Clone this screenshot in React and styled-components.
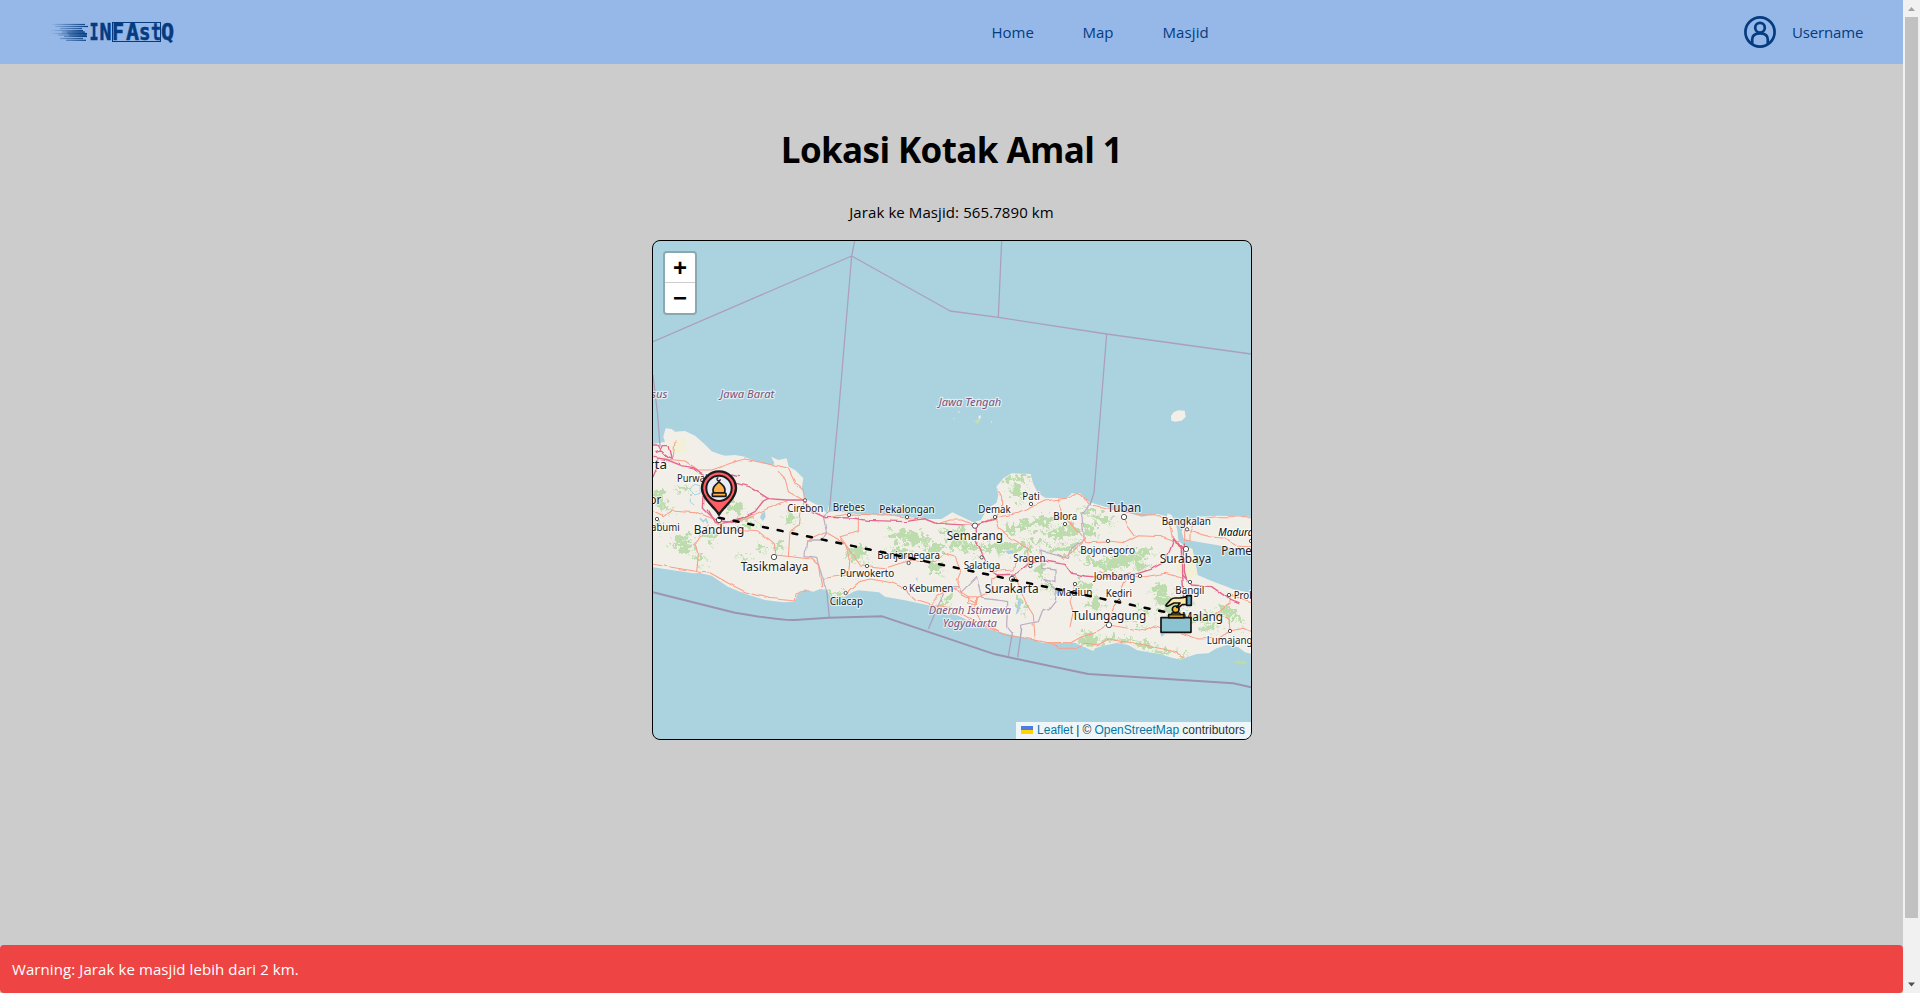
import React from "react";
import styled, { createGlobalStyle } from "styled-components";

const GlobalStyle = createGlobalStyle`
  *, *::before, *::after { box-sizing: border-box; }
  html, body { margin: 0; height: 100%; overflow: hidden; }
  body {
    background: #ccc;
    color: #000;
    font-family: "Segoe UI", "Open Sans", sans-serif;
    font-size: 15px;
    line-height: 24px;
  }
  h1, p { margin: 0; }
`;

const Shell = styled.div`
  display: flex;
  height: 993px;
`;

const Page = styled.div`
  flex: 1;
  min-width: 0;
  display: flex;
  flex-direction: column;
`;

const NavBar = styled.nav`
  height: 64px;
  flex: none;
  padding: 0 40px;
  display: flex;
  align-items: center;
  justify-content: space-between;
  background: #95b8e8;
  color: #053b80;
`;

const Brand = styled.div`
  width: 416px;
  height: 64px;
  svg { display: block; }
`;

const NavLinks = styled.div`
  display: flex;
  gap: 48px;
`;

const NavLink = styled.a`
  width: ${(p) => p.$width}px;
  white-space: nowrap;
  letter-spacing: ${(p) => p.$spacing || 0}px;
`;

const Account = styled.div`
  display: flex;
  align-items: center;
  gap: 16px;
  svg { display: block; }
`;

const Main = styled.main`
  flex: 1;
  display: flex;
  flex-direction: column;
  align-items: center;
`;

const Title = styled.h1`
  margin-top: 66px;
  font-size: 35px;
  line-height: 40px;
  font-weight: 700;
  letter-spacing: -0.6px;
`;

const Distance = styled.p`
  margin-top: 30px;
  height: 24px;
  letter-spacing: 0.09px;
`;

const MapFrame = styled.section`
  position: relative;
  left: 0.5px;
  width: 600px;
  height: 500px;
  margin-top: 16px;
  border: 1px solid #000;
  border-radius: 8px;
  overflow: hidden;
  background: #abd3df;
`;

const MapCanvas = styled.svg`
  display: block;
  width: 598px;
  height: 498px;
`;

const ZoomControl = styled.div`
  position: absolute;
  top: 10px;
  left: 10px;
  border: 2px solid rgba(0, 0, 0, 0.2);
  border-radius: 4px;
  background-clip: padding-box;
`;

const ZoomButton = styled.div`
  width: 30px;
  height: 30px;
  background: #fff;
  border-bottom: ${(p) => (p.$divided ? "1px solid #ccc" : "0")};
  border-radius: ${(p) => (p.$divided ? "2px 2px 0 0" : "0 0 2px 2px")};
  font: bold 24px/29px "Liberation Sans", Arial, sans-serif;
  text-align: center;
`;

const Attribution = styled.div`
  position: absolute;
  right: 0;
  bottom: 0;
  height: 17px;
  padding: 0 6px 0 5px;
  background: rgba(255, 255, 255, 0.8);
  color: #333;
  font: 12px/17px "Liberation Sans", Arial, sans-serif;
  word-spacing: -0.2px;
  white-space: nowrap;
  a { color: #0078a8; }
  svg { margin-right: 4px; }
`;

const Toast = styled.div`
  height: 48px;
  flex: none;
  padding: 12px;
  border-radius: 4px;
  background: #ef4444;
  color: #fff;
  letter-spacing: 0.09px;
`;

const ScrollTrack = styled.div`
  width: 17px;
  flex: none;
  display: flex;
  flex-direction: column;
  align-items: center;
  background: #f1f1f1;
  svg { flex: none; display: block; }
`;

const ScrollThumb = styled.div`
  width: 13px;
  height: 901px;
  background: #c1c1c1;
`;

function Logo() {
  const streaks = [
    [52, 24.5, 85], [55, 26.5, 88], [60, 28.5, 82], [51, 30.5, 83],
    [62, 32, 85], [51, 33.5, 87], [58, 35, 87], [64, 36.5, 87],
    [60, 38.5, 83], [66, 40.3, 86],
  ];
  return (
    <svg width="140" height="64" viewBox="40 0 140 64" aria-label="INFAstQ">
      <defs>
        <linearGradient id="streak" gradientUnits="userSpaceOnUse" x1="50" x2="88" y1="0" y2="0">
          <stop offset="0" stopColor="#053b80" stopOpacity="0" />
          <stop offset="1" stopColor="#053b80" />
        </linearGradient>
      </defs>
      {streaks.map(([a, y, b]) => (
        <rect key={y} x={a} y={y - 0.6} width={b - a} height="1.2" fill="url(#streak)" />
      ))}
      <path d="M66 31.5L82 30L84 32L87 34L85 37L70 36.5z" fill="url(#streak)" opacity=".6" />
      <rect x="112.5" y="22.5" width="48" height="19" fill="none" stroke="#053b80" />
      <g fill="#053b80" stroke="#053b80" strokeWidth=".5" fontFamily="DejaVu Sans Mono, monospace" fontWeight="700" fontSize="22.5">
        {[["I", 89.5, 9], ["N", 99.5, 12], ["F", 112, 12], ["A", 126, 13], ["s", 139, 11.5], ["t", 151, 10], ["Q", 161, 13]].map(([c, x, w]) => (
          <text key={c} transform={`translate(${x} 39.8) scale(${w / 13.5} 1)`}>{c}</text>
        ))}
      </g>
    </svg>
  );
}

function UserIcon() {
  return (
    <svg width="32" height="32" viewBox="0 0 32 32" fill="none" stroke="#053b80" strokeWidth="2.7">
      <circle cx="16" cy="16" r="14.6" />
      <circle cx="16" cy="11.7" r="4.8" />
      <path d="M8.2 28V23.5C8.2 19.5 11 17.3 16 17.3S23.8 19.5 23.8 23.5V28" />
    </svg>
  );
}

/* Map geometry is expressed at three units per pixel. */
const JAVA =
  "M24 87L60 80L55 65L62 40L80 42L90 50L120 48L150 62L175 84L200 109L222 117L240 122L270 120L300 125L320 135L345 142L385 152L388 143L378 125L400 135L425 130L431 155L450 165L475 190L470 222L480 250L500 262L528 275L546 296L552 268L556 290L600 292L640 298L700 300L780 305L850 312L890 312L922 292L950 305L985 322L1008 315L1025 283L1055 263L1060 240L1054 215L1075 190L1100 175L1157 177L1164 205L1178 233L1200 248L1265 250L1280 235L1305 235L1330 260L1385 277L1440 290L1490 305L1540 297L1565 305L1568 295L1580 300L1590 320L1597 345L1600 375L1612 388L1642 402L1651 440L1658 480L1700 498L1740 513L1770 525L1818 533V716L1800 712L1780 697L1745 690L1715 700L1690 715L1655 717L1625 727L1608 734L1580 728L1545 717L1510 712L1475 705L1450 690L1415 684L1375 692L1350 700L1345 708L1315 695L1290 683L1260 683L1215 683L1190 683L1170 674L1100 660L1040 645L1000 631L930 598L850 571L780 556L720 545L702 532L640 526L625 530L600 545L560 550L545 525L525 522L505 530L480 523L458 538L448 560L415 562L360 555L300 536L250 516L200 482L165 474L145 475L100 468L24 457z";

const MADURA =
  "M1616 330L1637 318L1655 305L1720 302L1818 305V410L1765 400L1715 390L1665 382L1640 377L1616 371L1610 350z";

const FORESTS = [
  [115, 395, 30, 16], [110, 370, 22, 10], [190, 365, 26, 12], [45, 240, 16, 18], [50, 272, 22, 13], [115, 222, 18, 10],
  [270, 275, 26, 16], [310, 315, 26, 12], [440, 308, 15, 15], [402, 392, 14, 12], [160, 430, 10, 12], [295, 425, 9, 8],
  [350, 398, 8, 9], [45, 328, 16, 8], [640, 412, 28, 17], [625, 425, 16, 10], [780, 362, 48, 18], [820, 378, 30, 16],
  [765, 410, 30, 12], [870, 400, 28, 14], [925, 350, 36, 10], [940, 380, 30, 16], [980, 400, 25, 14], [870, 458, 22, 14],
  [905, 555, 14, 20], [1115, 230, 20, 17], [1085, 195, 18, 12], [1130, 188, 28, 8], [1165, 325, 42, 11],
  [1110, 340, 30, 11], [1055, 395, 42, 14], [1120, 400, 42, 12], [1215, 312, 38, 10], [1275, 345, 34, 17],
  [1235, 360, 34, 10], [1180, 380, 24, 9], [1245, 405, 32, 13], [1290, 395, 22, 10], [1330, 288, 18, 9],
  [1375, 312, 32, 12], [1335, 345, 16, 18], [1440, 435, 48, 15], [1385, 452, 42, 14], [1485, 410, 34, 12],
  [1345, 440, 26, 10], [1490, 450, 22, 10], [1185, 468, 12, 20], [1210, 520, 12, 12], [1320, 512, 16, 13],
  [1345, 565, 14, 16], [1545, 525, 28, 18], [1555, 560, 26, 16], [1575, 580, 26, 14], [1665, 610, 36, 16],
  [1690, 635, 20, 9], [1330, 670, 28, 18], [1335, 690, 20, 12], [1395, 675, 26, 10], [1440, 678, 24, 9], [1500, 690, 26, 9],
  [1555, 710, 20, 7], [1620, 720, 14, 6], [1740, 590, 28, 14], [1770, 615, 18, 10], [1490, 590, 18, 10],
  [575, 540, 22, 7], [1125, 570, 12, 14], [1610, 560, 14, 9], [1470, 625, 16, 8],
];

const TRUNK = [
  "M24 90H36L45 105L52 92H72L82 130L70 125L48 108L30 112", "M24 127L60 132L110 152L145 158L175 178",
  "M24 185L35 160L38 132", "M175 178L178 225L175 280L205 310L222 317L260 322L300 305L330 290L355 258L370 250",
  "M190 285L210 320L230 326L285 310", "M275 205L310 215L345 235L370 251L425 255L475 255L508 292L540 307L620 309L670 316L780 320L840 311L875 325L990 332L1050 312",
  "M260 180L280 185", "M990 332L992 375L1005 400L1020 435L1040 470L1060 480L1110 477L1128 465L1155 443",
  "M1155 443L1200 438L1260 448L1280 475L1320 483L1370 487L1480 475L1520 462L1560 440L1575 405L1587 372L1600 390L1620 402",
  "M1587 372L1596 388L1612 400L1613 480L1615 520L1610 560L1595 590", "M1613 480L1640 510L1700 515L1750 550L1782 563", "M1618 390L1618 470L1625 492",
];

const ROADS = [
  "M60 132L120 138L160 165L200 165L260 145L300 132L345 142L400 152L430 160L450 205L475 225L478 250",
  "M24 290L55 305L80 285L150 290L200 310", "M400 170L420 190L430 230L475 255", "M215 325L260 345L340 350L385 385L390 420L440 425L500 432L520 450L530 515",
  "M24 448L70 455L148 468L190 470L250 505L300 530L370 550L448 558L450 540L490 525", "M155 470L160 420L150 385L170 365L190 330",
  "M270 325L380 275L425 258", "M430 425L435 350L460 330L465 290L480 256", "M485 375L540 350L600 385L615 430L610 480L535 490",
  "M640 300V350L585 365L610 400L645 450L720 458L800 435L870 440L895 415L930 425L945 465L935 490L950 540L990 560L1000 545",
  "M610 528L640 500L680 492L740 503L775 518L810 552L860 568L920 580L1000 625L1080 660L1170 675L1210 683L1280 682L1310 665L1360 650L1390 630",
  "M540 310L610 297L720 300L800 312L850 314L880 326L915 315L950 315L990 332L1050 308L1120 295L1200 258L1265 250L1300 235L1340 270L1430 288L1490 300L1540 299L1575 325L1587 372",
  "M1050 308L1070 285L1070 245L1058 220", "M1240 252L1255 300L1290 338L1310 360L1320 380L1390 378L1440 383L1480 362L1555 365L1600 380",
  "M1437 306L1450 335L1470 362", "M1255 430L1280 415L1310 380", "M1365 470L1400 483L1500 485L1560 475L1613 490",
  "M1290 507L1275 560L1285 590L1275 635", "M1422 559L1430 515L1445 480", "M1422 559L1400 590L1390 630L1450 640L1500 648L1530 633L1600 650L1660 672L1720 670L1755 648L1795 640L1818 650",
  "M1755 648L1752 610L1710 600L1755 565V540L1818 560", "M1000 545L985 580L1010 620L1060 650", "M968 545H995V565H968z M980 565V590 M995 552L1040 530L1040 495L1060 482",
  "M1110 480L1125 520L1140 560L1165 600L1170 670", "M1615 345L1645 348L1690 365L1740 370L1770 393L1818 395",
  "M1616 350V378L1635 380V345L1655 312L1720 305H1818", "M1210 683L1240 700H1290L1320 685L1360 690L1390 672L1500 690L1580 708L1620 725",
  "M90 80L85 125", "M1155 443L1150 400L1100 370L1060 340L1050 308", "M1040 470L1100 465L1120 430L1156 450", "M860 568L880 540L930 520L970 545",
];

const SEA_BORDERS = [
  "M24 -220L620 -477L905 -318L915 -312L1060 -293L1385 -243L1818 -183", "M1070 -522L1060 -293",
  "M629 -522L620 -477L580 0L553 290", "M1385 -243L1347 233L1335 270",
  "M24 -120L38 0L45 95", "M545 525L553 606", "M850 642L870 595", "M1102 655L1090 723", "M1130 640L1118 727",
];

const LAND_BORDERS = [
  "M553 290L535 305L545 350L530 375L485 375L480 425L515 430L530 480L535 510L545 525",
  "M1335 270L1310 300L1318 370L1280 400L1270 430L1215 415L1185 405L1190 460L1230 465L1230 500L1200 490L1235 525L1230 560L1210 585L1195 580L1180 620L1130 630V640",
  "M870 595L905 515H940L950 530L995 485L1010 550L1060 555L1088 560L1085 635L1102 655",
];

const SOUTH_BORDER = "M24 532L270 593Q410 617 450 615L550 608L712 604L1050 718L1215 753L1330 777L1765 805L1818 817";

/* name, left, baseline, width, size */
const LABELS = [
  ["Bandung", 146, 357, 152, 37], ["Purwakarta", 96, 202, 152, 30], ["Cirebon", 427, 291, 108, 30], ["Brebes", 563, 288, 97, 30],
  ["Tasikmalaya", 287, 467, 203, 37], ["Purwokerto", 585, 485, 163, 30], ["Cilacap", 554, 570, 100, 30], ["Kebumen", 792, 531, 133, 30],
  ["Pekalongan", 703, 293, 166, 30], ["Demak", 1000, 294, 97, 30], ["Pati", 1132, 255, 52, 30], ["Semarang", 905, 375, 169, 37],
  ["Banjarnegara", 697, 432, 188, 30], ["Salatiga", 956, 461, 110, 30], ["Sragen", 1105, 441, 97, 30], ["Surakarta", 1019, 534, 162, 37],
  ["Blora", 1225, 314, 72, 30], ["Tuban", 1387, 292, 102, 37], ["Bangkalan", 1550, 331, 148, 30], ["Pamekasan", 1729, 419, 186, 37],
  ["Surabaya", 1544, 445, 155, 37], ["Bojonegoro", 1306, 418, 164, 30], ["Jombang", 1346, 496, 125, 30], ["Madiun", 1235, 543, 107, 30],
  ["Kediri", 1382, 546, 79, 30], ["Bangil", 1591, 536, 87, 30], ["Probolinggo", 1766, 551, 168, 30], ["Malang", 1610, 619, 124, 37],
  ["Tulungagung", 1281, 614, 223, 37], ["Lumajang", 1685, 688, 138, 30], ["Jakarta", -66, 161, 132, 37], ["Bogor", -51, 266, 100, 37],
  ["Sukabumi", -31, 348, 135, 30],
];

const REGIONS = [
  ["Jawa Barat", 226, -50, 162], ["Khusus", -40, -50, 107], ["Jawa Tengah", 881, -27, 188],
  ["Daerah Istimewa", 851, 596, 247], ["Yogyakarta", 893, 636, 163],
];

const TOWNS = [
  [222, 315, 8], [387, 426, 8], [480, 256, 5], [612, 300, 5], [36, 312, 5], [786, 306, 5], [1050, 306, 5], [1158, 267, 5],
  [990, 332, 8], [791, 444, 5], [666, 453, 5], [602, 534, 5], [780, 519, 5], [1010, 427, 5], [1156, 453, 5], [1101, 492, 8],
  [1260, 327, 5], [1437, 306, 8], [1626, 343, 5], [1623, 402, 8], [1389, 378, 5], [1485, 483, 5], [1290, 507, 5], [1422, 559, 5],
  [1635, 501, 5], [1752, 540, 5], [1392, 630, 8], [1755, 648, 5], [1818, 378, 5],
];

function MosqueMarker() {
  return (
    <g stroke="#1a1a1a" strokeWidth="7" strokeLinejoin="round">
      <path d="M222 299C212 279 171 252 171 220A51 51 0 0 1 273 220C273 252 232 279 222 299z" fill="#ff5c66" />
      <circle cx="222" cy="220" r="38" fill="#e8ecf5" strokeWidth="6" />
      <path d="M206 234C199 218 212 209 222 201C232 209 245 218 238 234z" fill="#ffb04d" strokeWidth="5" />
      <rect x="202" y="234" width="41" height="10" rx="2" fill="#ffb04d" strokeWidth="5" />
      <path d="M222 201V195M220 188A5 5 0 1 0 226 193" fill="none" strokeWidth="4" />
    </g>
  );
}

function DonationMarker() {
  return (
    <g transform="translate(1215 465)" stroke="#111" strokeWidth="5" strokeLinejoin="round">
      <rect x="333" y="143" width="90" height="44" fill="#8bc4d0" />
      <rect x="356" y="134" width="46" height="9" fill="#f5bd31" />
      <path d="M366 133V129H389V133" fill="#f5bd31" />
      <circle cx="377" cy="118" r="10" fill="#f5bd31" />
      <path d="M348 105L363 88Q368 84 375 84H390Q402 82 410 80V103L397 104L385 112H380L390 99H372L354 108Q347 110 348 105z" fill="#ffe8a6" />
      <rect x="410" y="77" width="14" height="29" fill="#5ca6bb" />
    </g>
  );
}

function JavaMap() {
  return (
    <MapCanvas viewBox="24 -522 1794 1494">
      <defs>
        <filter id="ragged" filterUnits="userSpaceOnUse" x="0" y="100" width="1830" height="700">
          <feTurbulence type="fractalNoise" baseFrequency="0.055" numOctaves="3" seed="7" />
          <feDisplacementMap in="SourceGraphic" scale="65" xChannelSelector="R" yChannelSelector="G" />
        </filter>
        <filter id="winding" filterUnits="userSpaceOnUse" x="0" y="-60" width="1830" height="900">
          <feTurbulence type="fractalNoise" baseFrequency="0.025" numOctaves="2" seed="3" />
          <feDisplacementMap in="SourceGraphic" scale="12" xChannelSelector="R" yChannelSelector="G" />
        </filter>
        <clipPath id="land"><path d={JAVA + MADURA} /></clipPath>
      </defs>
      <g fill="#f2efe9">
        <path d={JAVA} />
        <path d={MADURA} />
        <path d="M1578 3L1586 -8L1600 -14L1619 -13L1622 5L1610 17L1590 20L1579 17z" />
        <path d="M1000 5L1006 -1L1008 8L1002 13z M940 -12L945 -8L940 -6z M1038 18L1042 22L1038 23z M926 9l4 3l-4 1z" />
      </g>
      <path d="M988 18L1004 11L1005 19L997 27z" fill="#c5dfb3" />
      <path d="M1765 740L1785 736L1807 741L1802 748L1775 748z" fill="#bcdab0" />
      <g clipPath="url(#land)">
        <path d="M1600 440L1642 402L1651 440L1658 480L1640 490L1590 470z" fill="#f1f0d5" />
        <path d="M70 90L120 65L125 110L90 118z" fill="#f2f0d8" />
        <g fill="#bddcae" filter="url(#ragged)">
          {FORESTS.map(([x, y, rx, ry], i) => <ellipse key={i} cx={x} cy={y} rx={rx} ry={ry} />)}
        </g>
        <g fill="#cfe5c2" filter="url(#ragged)">
          {FORESTS.map(([x, y, rx, ry], i) => (
            <g key={i}>
              <circle cx={x + rx + 10} cy={y + ry} r="5" />
              <circle cx={x - rx - 6} cy={y - ry / 2} r="4" />
              <circle cx={x + rx / 2} cy={y + ry + 12} r="4" />
            </g>
          ))}
        </g>
        <g fill="none" stroke="#abd3df" strokeWidth="3">
          <path d="M140 215L150 208L165 212V235L150 240L135 225zM136 250V262L148 270" />
          <path d="M165 310L175 320L183 312L188 325" strokeWidth="5" />
        </g>
        <path d="M350 295L360 290L362 305L354 318L345 308zM1080 408L1100 405L1106 415L1090 418zM812 490L817 487L818 500zM1120 550L1130 560L1122 590L1112 600L1117 575zM1545 655L1560 658L1550 665z" fill="#abd3df" />
      </g>
      <g fill="none" strokeLinejoin="round">
        <g stroke="#ac9fba" strokeWidth="3.8">
          {SEA_BORDERS.map((d) => <path key={d} d={d} />)}
        </g>
        <path d={SOUTH_BORDER} stroke="#9c93b0" strokeWidth="6" />
        <g filter="url(#winding)" strokeLinecap="round">
          <g stroke="#bcafc4" strokeWidth="3.8">{LAND_BORDERS.map((d) => <path key={d} d={d} />)}</g>
          <g stroke="#fb9f88" strokeWidth="3.2">{ROADS.map((d) => <path key={d} d={d} />)}</g>
          <g stroke="#e4688c" strokeWidth="4.2">{TRUNK.map((d) => <path key={d} d={d} />)}</g>
        </g>
      </g>
      <g fill="#fff" stroke="#555" strokeWidth="3">
        {TOWNS.map(([x, y, r]) => <circle key={`${x}-${y}`} cx={x} cy={y} r={r} />)}
      </g>
      <g fontFamily="Noto Sans, sans-serif" stroke="#fff" strokeOpacity=".6" strokeWidth="7" strokeLinejoin="round" paintOrder="stroke">
        <g fill="#1c1c1c">
          {LABELS.map(([t, x, y, w, s]) => (
            <text key={t} x={x} y={y} fontSize={s} textLength={w} lengthAdjust="spacingAndGlyphs">{t}</text>
          ))}
        </g>
        <text x="1720" y="363" fontSize="30" fontStyle="italic" fill="#000">Madura</text>
        <g fill="#7d527d" fontStyle="italic" fontSize="32.5">
          {REGIONS.map(([t, x, y, w]) => (
            <text key={t} x={x} y={y} textLength={w} lengthAdjust="spacingAndGlyphs">{t}</text>
          ))}
        </g>
      </g>
      <path d="M222 308L1593 598" stroke="#000" strokeWidth="7.5" strokeDasharray="15 30" strokeLinecap="round" />
      <MosqueMarker />
      <DonationMarker />
    </MapCanvas>
  );
}

function ScrollArrow({ down }) {
  return (
    <svg width="17" height={down ? 75 : 17} viewBox={down ? "0 -58 17 75" : "0 0 17 17"}>
      <path d={down ? "M5 6.5H12L8.5 10.5z" : "M5 11H12L8.5 7z"} fill={down ? "#505050" : "#a3a3a3"} />
    </svg>
  );
}

export default function App() {
  return (
    <>
      <GlobalStyle />
      <Shell>
        <Page>
          <NavBar>
            <Brand><Logo /></Brand>
            <NavLinks>
              <NavLink $width={43}>Home</NavLink>
              <NavLink $width={32}>Map</NavLink>
              <NavLink $width={46} $spacing={0.1}>Masjid</NavLink>
            </NavLinks>
            <Account>
              <UserIcon />
              <NavLink $width={71} $spacing={-0.15}>Username</NavLink>
            </Account>
          </NavBar>
          <Main>
            <Title>Lokasi Kotak Amal 1</Title>
            <Distance>Jarak ke Masjid: 565.7890 km</Distance>
            <MapFrame>
              <JavaMap />
              <ZoomControl>
                <ZoomButton $divided>+</ZoomButton>
                <ZoomButton>−</ZoomButton>
              </ZoomControl>
              <Attribution>
                <svg width="12" height="8" viewBox="0 0 12 8">
                  <path fill="#4c7be1" d="M0 0h12v4H0z" />
                  <path fill="#ffd500" d="M0 4h12v4H0z" />
                </svg>
                <a>Leaflet</a> | © <a>OpenStreetMap</a> contributors
              </Attribution>
            </MapFrame>
          </Main>
          <Toast>Warning: Jarak ke masjid lebih dari 2 km.</Toast>
        </Page>
        <ScrollTrack>
          <ScrollArrow />
          <ScrollThumb />
          <ScrollArrow down />
        </ScrollTrack>
      </Shell>
    </>
  );
}
